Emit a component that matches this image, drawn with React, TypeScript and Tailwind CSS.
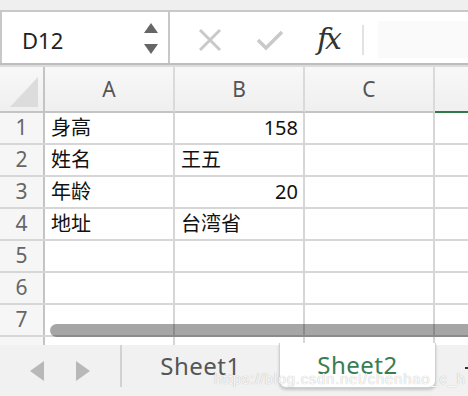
import React from 'react'

const font = "font-['Noto_Sans','Noto_Sans_CJK_SC',sans-serif]"

const cols = ['A', 'B', 'C']
const rows: { a?: string; b?: string; bRight?: boolean; n?: number }[] = [
  { n: 1, a: '身高', b: '158', bRight: true },
  { n: 2, a: '姓名', b: '王五' },
  { n: 3, a: '年龄', b: '20', bRight: true },
  { n: 4, a: '地址', b: '台湾省' },
  { n: 5 },
  { n: 6 },
  { n: 7 },
  {},
]

function Cell({ text, right }: { text?: string; right?: boolean }) {
  return (
    <div
      className={`w-[130px] shrink-0 h-full border-r-2 border-[#d6d6d6] flex items-center px-[6px] text-[20px] text-[#111] ${
        right ? 'justify-end pr-[5px]' : ''
      }`}
    >
      {text}
    </div>
  )
}

export default function App() {
  return (
    <div className={`relative w-[468px] h-[396px] overflow-hidden bg-white flex flex-col ${font}`}>
      {/* top strip */}
      <div className="h-[12px] shrink-0 bg-[#efefef] border-b-2 border-[#c8c8c8]" />

      {/* formula bar */}
      <div className="h-[51px] shrink-0 flex items-stretch">
        <div className="w-[170px] shrink-0 border-l-2 border-r-2 border-[#c8c8c8] flex items-center pl-[20px] pr-[8px]">
          <span className="text-[22px] text-[#222] flex-1 pt-[5px]">D12</span>
          <div className="flex flex-col gap-[11px] items-center mr-[2px] pt-[2px]">
            <svg width="14" height="10" viewBox="0 0 14 10">
              <path d="M7 0 L14 10 L0 10 Z" fill="#666" />
            </svg>
            <svg width="14" height="10" viewBox="0 0 14 10">
              <path d="M0 0 L14 0 L7 10 Z" fill="#666" />
            </svg>
          </div>
        </div>
        <div className="flex-1 flex items-center">
          <svg width="24" height="24" viewBox="0 0 24 24" className="ml-[28px] mt-[4px]">
            <path d="M2 2 L22 22 M22 2 L2 22" stroke="#c9c9c9" strokeWidth="3" />
          </svg>
          <svg width="28" height="24" viewBox="0 0 28 24" className="ml-[34px] mt-[4px]">
            <path d="M2 12 L10 20 L26 4" stroke="#c9c9c9" strokeWidth="3.5" fill="none" />
          </svg>
          <span className="ml-[33px] w-[31px] text-[30px] italic font-normal text-[#333] font-['DejaVu_Serif',serif] leading-none tracking-[-3px] mt-[2px]">
            fx
          </span>
          <div className="ml-[14px] w-[2px] h-[30px] bg-[#e2e2e2] mt-[4px]" />
          <div className="ml-[14px] flex-1 h-[37px] bg-[#fafafa] mt-[4px]" />
        </div>
      </div>
      <div className="h-[4px] shrink-0 border-t-2 border-[#bdbdbd] bg-[#dcdcdc]" />

      {/* column headers */}
      <div className="h-[46px] shrink-0 flex bg-gradient-to-b from-[#f8f8f8] to-[#efefef]">
        <div className="w-[45px] shrink-0 border-r-2 border-b-2 border-[#c4c4c4] flex items-end justify-end pr-[5px] pb-[4px]">
          <svg width="28" height="30" viewBox="0 0 28 30">
            <path d="M0 30 L28 0 L28 30 Z" fill="#dcdcdc" />
          </svg>
        </div>
        {cols.map((c) => (
          <div
            key={c}
            className="w-[130px] shrink-0 border-r-2 border-b-2 border-r-[#dadada] border-b-[#c4c4c4] flex items-center justify-center text-[21px] text-[#555] pt-[2px]"
          >
            {c}
          </div>
        ))}
        <div className="flex-1 border-b-2 border-[#2f7a48]" />
      </div>

      {/* grid */}
      <div className="flex-1 overflow-hidden flex flex-col">
        {rows.map((r, i) => (
          <div key={i} className="h-[32px] shrink-0 flex border-b-2 border-[#d6d6d6]">
            <div className="w-[45px] shrink-0 h-full bg-[#f6f6f6] border-r-2 border-[#c4c4c4] flex items-center justify-center text-[21px] text-[#666]">
              {r.n}
            </div>
            <Cell text={r.a} />
            <Cell text={r.b} right={r.bRight} />
            <Cell />
            <div className="flex-1" />
          </div>
        ))}
      </div>

      {/* sheet tabs */}
      <div className="h-[51px] shrink-0 bg-[#f1f1f1] flex items-start">
        <div className="w-[120px] shrink-0 h-[42px] flex items-center">
          <svg width="14" height="20" viewBox="0 0 14 20" className="ml-[30px] mt-[10px]">
            <path d="M14 0 L14 20 L0 10 Z" fill="#b8b8b8" />
          </svg>
          <svg width="14" height="20" viewBox="0 0 14 20" className="ml-[32px] mt-[10px]">
            <path d="M0 0 L0 20 L14 10 Z" fill="#b8b8b8" />
          </svg>
        </div>
        <div className="w-[159px] shrink-0 h-[42px] border-l-2 border-[#d2d2d2] flex items-center justify-center text-[24px] text-[#555] tracking-[0.5px]">
          Sheet1
        </div>
        <div className="w-[157px] shrink-0 h-[45px] -mt-[2px] bg-white rounded-b-[7px] border-x border-b border-[#d0d0d0] shadow-[0_2px_3px_rgba(0,0,0,0.18)] flex items-center justify-center text-[24px] text-[#3a7d50] tracking-[0.5px]">
          Sheet2
        </div>
        <div className="flex-1 flex justify-end pt-[22px]">
          <div className="w-[3px] h-[2px] bg-[#333]" />
        </div>
      </div>

      {/* horizontal scrollbar */}
      <div className="absolute left-[50px] top-[324px] w-[440px] h-[13px] rounded-full bg-black/35" />

      {/* watermark */}
      <div className="absolute left-[214px] top-[368px] text-[15px] font-['Liberation_Sans',sans-serif] text-white/90 [text-shadow:0_0_1px_rgba(0,0,0,0.35)] tracking-[0.7px] whitespace-nowrap">
        https://blog.csdn.net/chenhao_c_h
      </div>
    </div>
  )
}
